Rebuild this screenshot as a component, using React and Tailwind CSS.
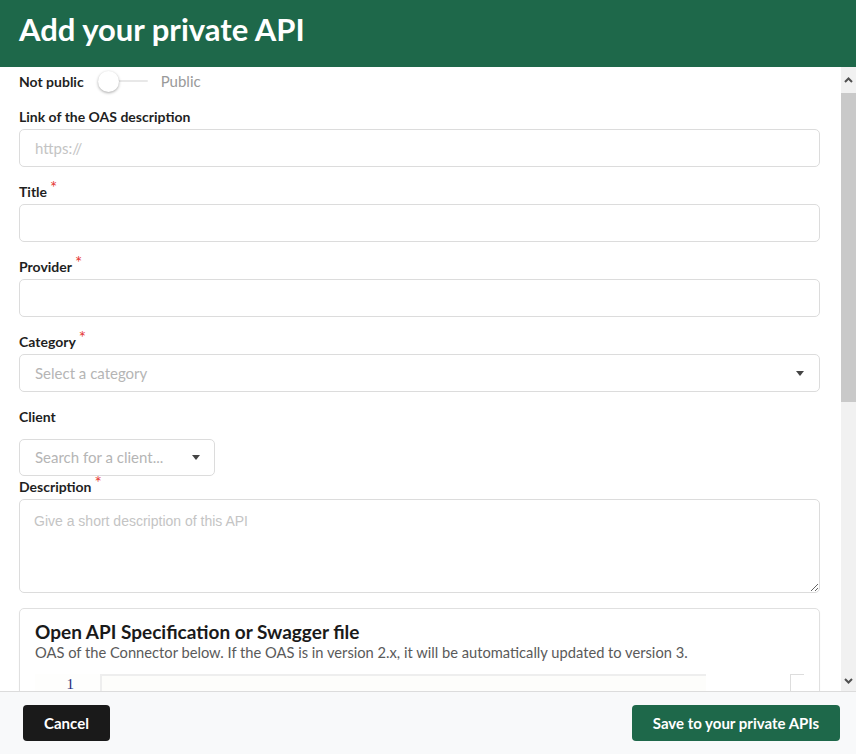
import React from 'react';

const Label = ({ children, required, className = 'mb-[4px]' }) => (
  <div className={`h-[18px] flex items-center text-[14px] font-bold text-[#1f1f1f] ${className}`}>
    {children}
    {required && <span className="ml-[3px] relative -top-[4px] text-[#e53935] text-[17px] leading-none font-normal">*</span>}
  </div>
);

const Caret = () => (
  <span className="w-0 h-0 border-x-[4px] border-t-[5px] border-x-transparent border-t-[#444444]" />
);

const Field = ({ label, required, placeholder }) => (
  <div className="mb-[15px]">
    <Label required={required}>{label}</Label>
    <input
      readOnly
      placeholder={placeholder}
      className="w-full h-[38px] border border-[#dcdcdc] rounded-[5px] px-[15px] text-[15px] text-[#333] placeholder:text-[#c4c4c4] outline-none"
    />
  </div>
);

const App = () => {
  return (
    <div className="w-[856px] h-[754px] flex flex-col overflow-hidden bg-white font-['Lato',sans-serif]">
      <header className="h-[67px] shrink-0 bg-[#1e684a] px-[19px] flex items-center pb-[8px]">
        <h1 className="text-[31px] font-bold text-white leading-none">Add your private API</h1>
      </header>

      <div className="flex-1 min-h-0 flex">
        <div className="flex-1 overflow-hidden pl-[19px] pr-[21px] pt-[4px]">
          <div className="h-[20px] flex items-center">
            <span className="text-[14px] font-bold text-[#1f1f1f]">Not public</span>
            <div className="relative ml-[14px] w-[50px] h-[21px] flex items-center">
              <div className="w-full h-[2px] bg-[#e8e8e8] rounded" />
              <div className="absolute left-0 top-0 w-[21px] h-[21px] rounded-full bg-white shadow-[0_1px_3px_rgba(0,0,0,0.35)]" />
            </div>
            <span className="ml-[13px] text-[15px] text-[#9a9a9a]">Public</span>
          </div>

          <div className="mt-[16px]">
            <Field label="Link of the OAS description" placeholder="https://" />
            <Field label="Title" required />
            <Field label="Provider" required />

            <div className="mb-[15px]">
              <Label required>Category</Label>
              <div className="h-[38px] border border-[#dcdcdc] rounded-[5px] pl-[15px] pr-[15px] flex items-center justify-between">
                <span className="text-[15px] text-[#b5b5b5]">Select a category</span>
                <Caret />
              </div>
            </div>

            <Label className="mb-[14px]">Client</Label>
            <div className="w-[196px] h-[37px] border border-[#dcdcdc] rounded-[5px] pl-[15px] pr-[14px] flex items-center justify-between">
              <span className="text-[15px] text-[#b5b5b5]">Search for a client...</span>
              <Caret />
            </div>

            <div className="mt-[1px]">
              <Label required>Description</Label>
              <textarea
                readOnly
                placeholder="Give a short description of this API"
                className="block w-full h-[94px] border border-[#dcdcdc] rounded-[5px] px-[14px] py-[11px] text-[14px] font-['Liberation_Sans',sans-serif] placeholder:text-[#c4c4c4] outline-none resize-y"
              />
            </div>

            <div className="mt-[15px] border border-[#e0e0e0] rounded-[5px] px-[15px] pt-[12px] pb-[20px] shadow-[0_1px_2px_rgba(0,0,0,0.04)]">
              <h2 className="text-[19px] leading-[22px] font-bold text-[#1a1a1a]">Open API Specification or Swagger file</h2>
              <p className="text-[14.7px] leading-[18px] text-[#5a5a5a]">
                OAS of the Connector below. If the OAS is in version 2.x, it will be automatically updated to version 3.
              </p>
              <div className="mt-[13px] flex h-[60px]">
                <div className="w-[65px] bg-[#fefefd] pr-[26px] pt-[1px] text-right font-['Liberation_Serif',serif] text-[15px] leading-[18px] text-[#1d2a7a]">1</div>
                <div className="w-[606px] border-t-2 border-l-2 border-[#eeeeee] bg-[#fdfdfb]" />
                <div className="flex-1" />
                <div className="w-[14px] border-t border-l border-[#dddddd]" />
              </div>
            </div>
          </div>
        </div>

        <div className="w-[15px] shrink-0 bg-[#f1f1f1] flex flex-col">
          <div className="h-[26px] flex items-center justify-center">
            <svg width="9" height="6" viewBox="0 0 9 6"><path d="M1 5 L4.5 1.5 L8 5" fill="none" stroke="#505050" strokeWidth="2" /></svg>
          </div>
          <div className="h-[309px] bg-[#c9c9c9]" />
          <div className="flex-1" />
          <div className="h-[20px] flex items-center justify-center">
            <svg width="9" height="6" viewBox="0 0 9 6"><path d="M1 1 L4.5 4.5 L8 1" fill="none" stroke="#505050" strokeWidth="2" /></svg>
          </div>
        </div>
      </div>

      <footer className="h-[63px] shrink-0 border-t border-[#dcdcdc] bg-[#f8f9fa] flex items-center justify-between pl-[23px] pr-[16px]">
        <button className="w-[87px] h-[36px] rounded-[4px] bg-[#1a1a1a] text-white text-[15px] font-bold">Cancel</button>
        <button className="w-[208px] h-[36px] rounded-[4px] bg-[#1e684a] text-white text-[15px] font-bold">Save to your private APIs</button>
      </footer>
    </div>
  );
};

export default App;
